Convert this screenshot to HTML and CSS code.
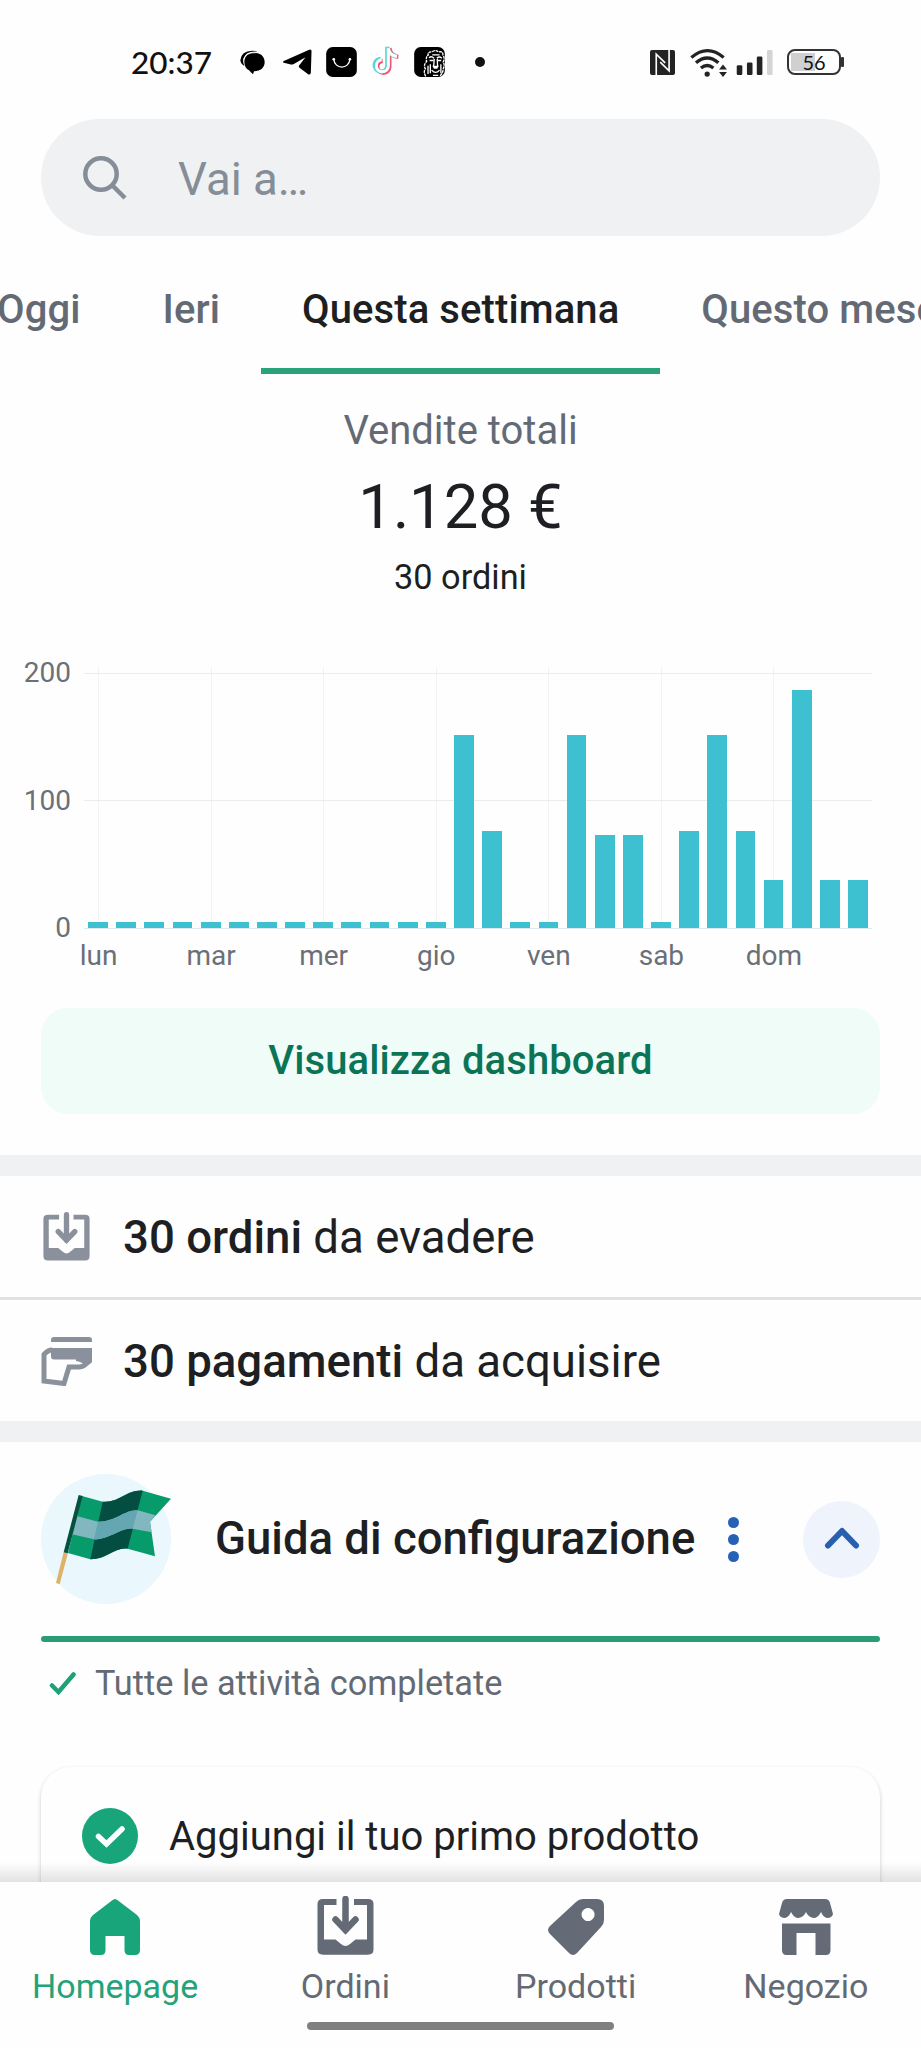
FILE: index.html
```html
<!DOCTYPE html>
<html lang="it">

<head>
    <meta charset="UTF-8">
    <title>Homepage</title>
    <link rel="stylesheet" href="styles.css">
</head>

<body>
    <div class="screen">
        <header class="statusbar">
            <span class="time">20:37</span>
            <div class="notifications">
                <svg class="n-chat" viewBox="420 90 75 75">
                    <path d="M421 121q2-28 36-29q10 0 15 3q-34-3-42 21q-2 10 3 22q-11-6-12-17z" />
                    <path d="M462 98c20 0 32 11 32 28s-12 27-32 28l-3 9q-8-8-12-12c-9-5-14-13-14-25 0-17 11-28 29-28z" />
                    <path d="M431 119q4-22 37-21" fill="none" stroke="#fff" stroke-width="2" />
                </svg>
                <svg class="n-telegram" viewBox="548 90 86 78">
                    <path d="M550 126l76-34q8-2 7 6l-2 64q-3 8-10 2l-24-18q-4-5 0-8l18-23-35 20q-6 3-12 1l-18-5q-5-2 0-5z" />
                </svg>
                <svg class="n-bag" viewBox="677 80 93 91">
                    <rect x="677" y="80" width="93" height="91" rx="20" />
                    <path d="M700 117c3 32 46 32 49 0" fill="none" stroke="#fff" stroke-width="4" stroke-linecap="round" />
                    <circle cx="700" cy="117" r="4" fill="#fff" />
                    <circle cx="749" cy="117" r="4" fill="#fff" />
                </svg>
                <svg class="n-tiktok" viewBox="813 78 87 95">
                    <g fill="none" stroke-width="13">
                        <path d="M868 84v56a18 18 0 1 1-20-18M868 84q4 24 27 26" stroke="#ef5675" />
                        <path d="M862 80v56a19 19 0 1 1-20-20M862 82q4 24 27 26" stroke="#58d8d4" />
                        <path d="M865 84v54a18 18 0 1 1-20-19M865 84q4 22 26 25" stroke="#fff" stroke-width="9" />
                    </g>
                </svg>
                <svg class="n-lion" viewBox="943 80 93 91">
                    <rect x="943" y="80" width="93" height="91" rx="20" />
                    <g fill="none" stroke="#fff" stroke-width="4">
                        <path d="M978 169q-8-14-1-23-7-12 4-22-4-14 5-20-4-9 11-9 10-8 20 0 15-3 13 9 7 10 1 22 6 8 0 20 0 12-9 21" stroke-dasharray="9 2" />
                        <path d="M988 113q7-7 15 1M1012 114q7-7 15 0M990 121h11M1013 121h12M1004 116l-2 24M1013 116l1 24M992 132v28M1024 132v28M985 137v25" />
                        <path d="M998 104h22M996 150q12 14 24 0M1000 166h16" />
                    </g>
                    <path d="M998 137h20l-5 9h-10z" fill="#fff" />
                </svg>
                <span class="n-more"></span>
            </div>
            <div class="system">
                <svg class="s-nfc" viewBox="92 86 76 76">
                    <rect x="92" y="86" width="76" height="76" rx="6" />
                    <path d="M111 163V99L138 125M150 85V149L123 123" fill="none" stroke="#fff" stroke-width="5" />
                </svg>
                <svg class="s-wifi" viewBox="211 78 116 88">
                    <g fill="none" stroke="#232323" stroke-width="10">
                        <path d="M217 107q49-42 98 0" />
                        <path d="M231 123q34-29 68 0" />
                        <path d="M246 139q19-16 38 0" />
                    </g>
                    <circle cx="265" cy="157" r="8" />
                    <path d="M301 143l12-15 12 15zM301 151l12 15 12-15z" />
                </svg>
                <svg class="s-signal" viewBox="353 86 110 76">
                    <rect x="354" y="132" width="17" height="30" rx="4" />
                    <rect x="385" y="124" width="17" height="38" rx="4" />
                    <rect x="415" y="106" width="17" height="56" rx="4" />
                    <rect x="446" y="86" width="17" height="76" rx="4" fill="#d4d4d4" />
                </svg>
                <div class="battery">56</div>
            </div>
        </header>

        <div class="search">
            <svg viewBox="0 0 44 44">
                <circle cx="18" cy="18" r="15.7" />
                <path d="M29.5 29.5L42 42" />
            </svg>
            <span>Vai a…</span>
        </div>

        <nav class="tabs">
            <a class="tab">Oggi</a>
            <a class="tab">Ieri</a>
            <a class="tab active">Questa settimana</a>
            <a class="tab">Questo mese</a>
        </nav>

        <section class="summary">
            <p class="label">Vendite totali</p>
            <p class="total">1.128 €</p>
            <p class="orders">30 ordini</p>
        </section>

        <section class="chart">
            <div class="yaxis">
                <span>200</span>
                <span>100</span>
                <span>0</span>
            </div>
            <div class="plot" id="plot"></div>
        </section>

        <a class="dashboard">Visualizza dashboard</a>

        <section class="tasks">
            <div class="task">
                <svg class="icon-orders" viewBox="0 0 57 59">
                    <path class="fill" d="M6 3H19.500V9H7V43.500H18.500L24 48Q28.500 52 33 48L38.500 43.500H50V9H37V3H51Q56.500 3 56.500 8V53.500Q56.500 58.700 51 58.700H6Q.5 58.700 .5 53.500V8Q.5 3 6 3z" />
                    <path class="line" d="M28.500 3V34M18.500 23.500L28.500 34L38.500 23.500" />
                </svg>
                <p><b>30 ordini</b> da evadere</p>
            </div>
            <div class="task">
                <svg class="icon-pay" viewBox="0 0 52 50">
                    <path d="M10 6V4Q10 1 13 1H48Q51 1 51 4V6z" />
                    <path d="M10 12H51V23.500H13Q10 23.500 10 20.500z" />
                    <path class="hand" d="M11 14Q7 14 3 18.500V45L23 47.500L28 31H38Q41 31 43 29.500L48.500 25V14" />
                    <path d="M35 23H51L44 30Q42 26 35 25z" />
                </svg>
                <p><b>30 pagamenti</b> da acquisire</p>
            </div>
        </section>

        <section class="guide">
            <div class="guide-head">
                <div class="flag">
                    <svg viewBox="65 73 390 390">
                        <path d="M133 307l13 3-25 94-11-4z" fill="#dcb368" />
                        <path d="M188 139L250 156C303 160 320 120 370 123L455 147L392 216L407 320L325 297C285 292 260 330 213 329L146 310z" fill="#079a6b" />
                        <path d="M250 156C303 160 320 120 370 123L325 297C285 292 260 330 213 329z" fill="#034e40" />
                        <path d="M172 199L236 216C290 217 315 180 355 182L409 197L392 216L397 248L340 237C300 234 270 272 224 269L158 254z" fill="#83b7bf" />
                        <path d="M236 216C290 217 315 180 355 182L340 237C300 234 270 272 224 269z" fill="#64a6b1" />
                        <path d="M178 136l12 3-45 172-12-3z" fill="#03513e" />
                    </svg>
                </div>
                <h2>Guida di configurazione</h2>
                <div class="more"><i></i><i></i><i></i></div>
                <div class="collapse">
                    <svg viewBox="0 0 36 22">
                        <path d="M4 18.500L18 4L32 18.500" />
                    </svg>
                </div>
            </div>
            <div class="progress"></div>
            <div class="done">
                <svg viewBox="0 0 28 24">
                    <path d="M3 14.500L9.500 21L24.500 3.500" />
                </svg>
                <span>Tutte le attività completate</span>
            </div>
            <div class="card">
                <svg viewBox="0 0 56 56">
                    <circle cx="28" cy="28" r="28" />
                    <path d="M16.500 28.500L24.500 36L40 21" />
                </svg>
                <span>Aggiungi il tuo primo prodotto</span>
            </div>
        </section>

        <footer class="bottom">
            <div class="nav">
                <a class="nav-item active">
                    <svg class="i-home" viewBox="0 0 50 56">
                        <path d="M22 1.500Q25-1.500 28 1.500L47 16Q50 18.500 50 22V51Q50 56 45 56H39Q34.500 56 34.500 51V37H15.500V51Q15.500 56 11 56H5Q0 56 0 51V22Q0 18.500 3 16z" />
                    </svg>
                    <span>Homepage</span>
                </a>
                <a class="nav-item">
                    <svg class="icon-orders" viewBox="0 0 57 59">
                        <path class="fill" d="M6 3H19.500V9H7V43.500H18.500L24 48Q28.500 52 33 48L38.500 43.500H50V9H37V3H51Q56.500 3 56.500 8V53.500Q56.500 58.700 51 58.700H6Q.5 58.700 .5 53.500V8Q.5 3 6 3z" />
                        <path class="line" d="M28.500 3V34M18.500 23.500L28.500 34L38.500 23.500" />
                    </svg>
                    <span>Ordini</span>
                </a>
                <a class="nav-item">
                    <svg class="i-tag" viewBox="0 0 56 56">
                        <path fill-rule="evenodd" d="M35 0H49Q56 0 56 7V21Q56 25 53 28L29 54Q25 58 21 54L2 35Q-2 31 2 27L28 3Q31 0 35 0zM40 9a6.500 6.500 0 1 0 .1 0z" />
                    </svg>
                    <span>Prodotti</span>
                </a>
                <a class="nav-item">
                    <svg class="i-store" viewBox="0 0 54 56">
                        <path d="M8 0H46Q50 0 51 4L54 15Q53 19 48 19Q44 18 42 13Q39 19 34.500 19Q29 18 27 13Q25 18 19.500 19Q15 19 12 13Q10 18 6 19Q1 19 0 15L3 4Q4 0 8 0z" />
                        <path d="M3 24.500H51.500V51Q51.500 56 47 56H36.500V34H17.500V56H7.500Q3 56 3 51z" />
                    </svg>
                    <span>Negozio</span>
                </a>
            </div>
            <div class="handle"></div>
        </footer>
    </div>
    <script>
        // four bars a day, heights in px
        var days = [
            ["lun", 6, 6, 6, 6],
            ["mar", 6, 6, 6, 6],
            ["mer", 6, 6, 6, 6],
            ["gio", 6, 193, 97, 6],
            ["ven", 6, 193, 93, 93],
            ["sab", 6, 97, 193, 97],
            ["dom", 48, 238, 48, 48]
        ];
        var plot = document.getElementById("plot");
        for (var i = 0; i < days.length; i++) {
            var bars = "";
            for (var j = 1; j < days[i].length; j++) {
                bars += '<i style="height:' + days[i][j] + 'px"></i>';
            }
            plot.innerHTML += '<div class="day"><div class="bars">' + bars + '</div><span>' + days[i][0] + '</span></div>';
        }
    </script>
</body>

</html>
```
FILE: styles.css
```css
* {
    margin: 0;
    padding: 0;
    box-sizing: border-box;
}

body {
    background-color: #fefefe;
    font-family: Roboto, "Liberation Sans", sans-serif;
    color: #1d1f22;
}

svg {
    display: block;
    flex: none;
}

.screen {
    width: 921px;
    height: 2048px;
    overflow: hidden;
    position: relative;
}

/* status bar */
.statusbar {
    display: flex;
    align-items: center;
    height: 44px;
    margin: 40px 76px 35px 131px;
    font-family: Lato, sans-serif;
    color: #111;
}

.time {
    width: 109px;
    font-size: 31.5px;
    font-weight: 500;
}

.notifications,
.system {
    display: flex;
    align-items: center;
}

.system {
    margin-left: auto;
    fill: #232323;
}

.n-chat {
    width: 25px;
    height: 25px;
}

.n-telegram {
    width: 29px;
    height: 26px;
    margin-left: 18px;
}

.n-bag {
    width: 31px;
    height: 30px;
    margin-left: 14px;
}

.n-tiktok {
    width: 29px;
    height: 32px;
    margin-left: 14px;
}

.n-lion {
    width: 31px;
    height: 30px;
    margin-left: 14px;
}

.n-more {
    width: 10px;
    height: 10px;
    margin-left: 30px;
    border-radius: 50%;
    background-color: #111;
}

.s-nfc {
    width: 25px;
    height: 25px;
}

.s-wifi {
    width: 39px;
    height: 29px;
    margin-left: 14px;
}

.s-signal {
    width: 37px;
    height: 25px;
    margin-left: 8px;
}

.battery {
    position: relative;
    width: 54px;
    height: 26px;
    margin: 0 4px 0 14px;
    border: 2px solid #333;
    border-radius: 8px;
    background: linear-gradient(#d0d0d0, #d0d0d0) 2px 2px / 24px 18px no-repeat;
    font-size: 20px;
    line-height: 22px;
    text-align: center;
}

.battery::after {
    content: "";
    position: absolute;
    right: -5px;
    top: 6px;
    width: 3px;
    height: 10px;
    border-radius: 1px;
    background-color: #333;
}

/* search */
.search {
    display: flex;
    align-items: center;
    height: 117px;
    margin: 0 41px;
    padding-left: 42px;
    border-radius: 59px;
    background-color: #f0f1f3;
    color: #858e98;
    font-size: 45.5px;
}

.search svg {
    width: 44px;
    height: 44px;
    margin-right: 51px;
    fill: none;
    stroke: #858e98;
    stroke-width: 4.5;
}

.search span {
    padding-top: 3px;
}

/* tabs */
.tabs {
    display: flex;
    height: 138px;
    padding-top: 14px;
    margin-left: -44px;
    white-space: nowrap;
}

.tab {
    flex: none;
    padding: 0 41px;
    border-bottom: 6px solid transparent;
    font-size: 40px;
    font-weight: 500;
    line-height: 119px;
    letter-spacing: .1px;
    color: #646a74;
}

.tab.active {
    color: #1d1f22;
    border-color: #2aa27a;
}

/* totals */
.summary {
    padding-top: 29px;
    text-align: center;
}

.label {
    font-size: 40px;
    line-height: 56px;
    color: #646a74;
}

.total {
    margin: 8px 0;
    font-size: 61.5px;
    line-height: 80px;
}

.orders {
    font-size: 34.3px;
    line-height: 44px;
}

/* chart */
.chart {
    display: flex;
    height: 318px;
    margin: 56px 0 35px;
    font-size: 28px;
    line-height: 36px;
    color: #6b7078;
}

.yaxis {
    display: flex;
    flex-direction: column;
    justify-content: space-between;
    width: 84px;
    height: 291px;
    padding-right: 13px;
    text-align: right;
}

.plot {
    display: flex;
    width: 788px;
    margin-top: 12px;
}

.day {
    flex: 1;
}

.bars {
    display: flex;
    align-items: flex-end;
    height: 262px;
    margin-bottom: 9px;
    border-bottom: 1px solid #dcebee;
    background:
        linear-gradient(#ebebed, #ebebed) 0 6px / 100% 1px no-repeat,
        linear-gradient(#ebebed, #ebebed) 0 133px / 100% 1px no-repeat,
        linear-gradient(#f2f2f3, #f2f2f3) 14px 0 / 1px 100% no-repeat;
}

.bars i {
    flex: 1;
    margin: 0 4.2px;
    background-color: #3dc1d1;
}

.day span {
    display: flex;
    justify-content: center;
    width: 29px;
}

.dashboard {
    display: block;
    height: 106px;
    margin: 0 41px 41px;
    border-radius: 27px;
    background-color: #effcf8;
    color: #0b7457;
    font-size: 40px;
    font-weight: 500;
    line-height: 106px;
    letter-spacing: .1px;
    text-align: center;
}

/* tasks */
.tasks {
    border-top: 21px solid #eff1f2;
    border-bottom: 21px solid #f0f1f3;
}

.task {
    display: flex;
    align-items: center;
    height: 121px;
    font-size: 45.6px;
}

.task+.task {
    height: 124px;
    border-top: 3px solid #dde2e3;
}

.task p {
    padding-top: 2px;
}

.task b {
    font-weight: 500;
}

.task .icon-orders {
    width: 47px;
    height: 49px;
    margin: 0 33px 0 43px;
}

.icon-orders {
    fill: #8a919c;
    stroke: #8a919c;
}

.icon-orders .fill {
    stroke: none;
}

.icon-orders .line {
    fill: none;
    stroke-width: 6.5;
    stroke-linecap: round;
}

.icon-pay {
    width: 52px;
    height: 50px;
    margin: 0 30px 0 41px;
    fill: #8a919c;
}

.icon-pay .hand {
    fill: none;
    stroke: #8a919c;
    stroke-width: 5;
}

/* setup guide */
.guide {
    padding: 32px 41px 0;
}

.guide-head {
    display: flex;
    align-items: center;
    height: 130px;
}

.flag {
    width: 130px;
    height: 130px;
    border-radius: 50%;
    background-color: #eaf7fc;
}

.flag svg {
    width: 130px;
    height: 130px;
    overflow: visible;
}

.guide-head h2 {
    flex: 1;
    margin-left: 44px;
    padding-bottom: 2px;
    font-size: 45.5px;
    font-weight: 500;
    white-space: nowrap;
}

.more {
    display: flex;
    flex-direction: column;
    gap: 6px;
    margin-right: 64px;
}

.more i {
    width: 11px;
    height: 11px;
    border-radius: 50%;
    background-color: #2761b5;
}

.collapse {
    display: flex;
    align-items: center;
    justify-content: center;
    width: 77px;
    height: 77px;
    border-radius: 50%;
    background-color: #eff3fb;
}

.collapse svg {
    width: 36px;
    height: 22px;
    margin-bottom: 3px;
    fill: none;
    stroke: #285fae;
    stroke-width: 6;
    stroke-linecap: round;
    stroke-linejoin: round;
}

.progress {
    height: 6px;
    margin: 32px 0 17px;
    border-radius: 3px;
    background-color: #2a9d78;
}

.done {
    display: flex;
    align-items: center;
    height: 48px;
    font-size: 34.3px;
    color: #646a74;
}

.done svg {
    width: 28px;
    height: 24px;
    margin: 0 18px 0 8px;
    fill: none;
    stroke: #1fa078;
    stroke-width: 4.5;
    stroke-linecap: round;
}

.card {
    display: flex;
    height: 200px;
    margin-top: 60px;
    padding: 41px;
    border-radius: 30px;
    background-color: #fefefe;
    box-shadow: 0 2px 4px rgba(0, 0, 0, .2);
    font-size: 40px;
    line-height: 58px;
}

.card svg {
    width: 56px;
    height: 56px;
    margin-right: 31px;
    fill: #18a57a;
}

.card path {
    fill: none;
    stroke: #fff;
    stroke-width: 5.5;
    stroke-linecap: round;
}

/* bottom navigation lies over the scrolled content */
.bottom {
    position: absolute;
    left: 0;
    right: 0;
    bottom: 0;
    height: 166px;
    background-color: #fefefe;
}

.bottom::before {
    content: "";
    position: absolute;
    left: 0;
    right: 0;
    top: -20px;
    height: 20px;
    background: linear-gradient(rgba(0, 0, 0, 0), rgba(0, 0, 0, .11));
}

.nav {
    display: flex;
    height: 140px;
}

.nav-item {
    display: flex;
    flex: 1;
    flex-direction: column;
    justify-content: flex-end;
    align-items: center;
    padding-bottom: 14px;
    font-size: 34px;
    line-height: 44px;
    color: #646a74;
    fill: #646a76;
}

.nav-item.active {
    color: #24a27a;
    fill: #18a57a;
}

.nav-item svg {
    margin-bottom: 9px;
}

.nav-item .icon-orders {
    width: 57px;
    height: 59px;
    fill: #646a76;
    stroke: #646a76;
}

.i-home {
    width: 50px;
    height: 56px;
}

.i-tag {
    width: 56px;
    height: 56px;
}

.i-store {
    width: 54px;
    height: 56px;
}

.handle {
    width: 307px;
    height: 8px;
    margin: 0 auto;
    border-radius: 4px;
    background-color: #808080;
}
```
